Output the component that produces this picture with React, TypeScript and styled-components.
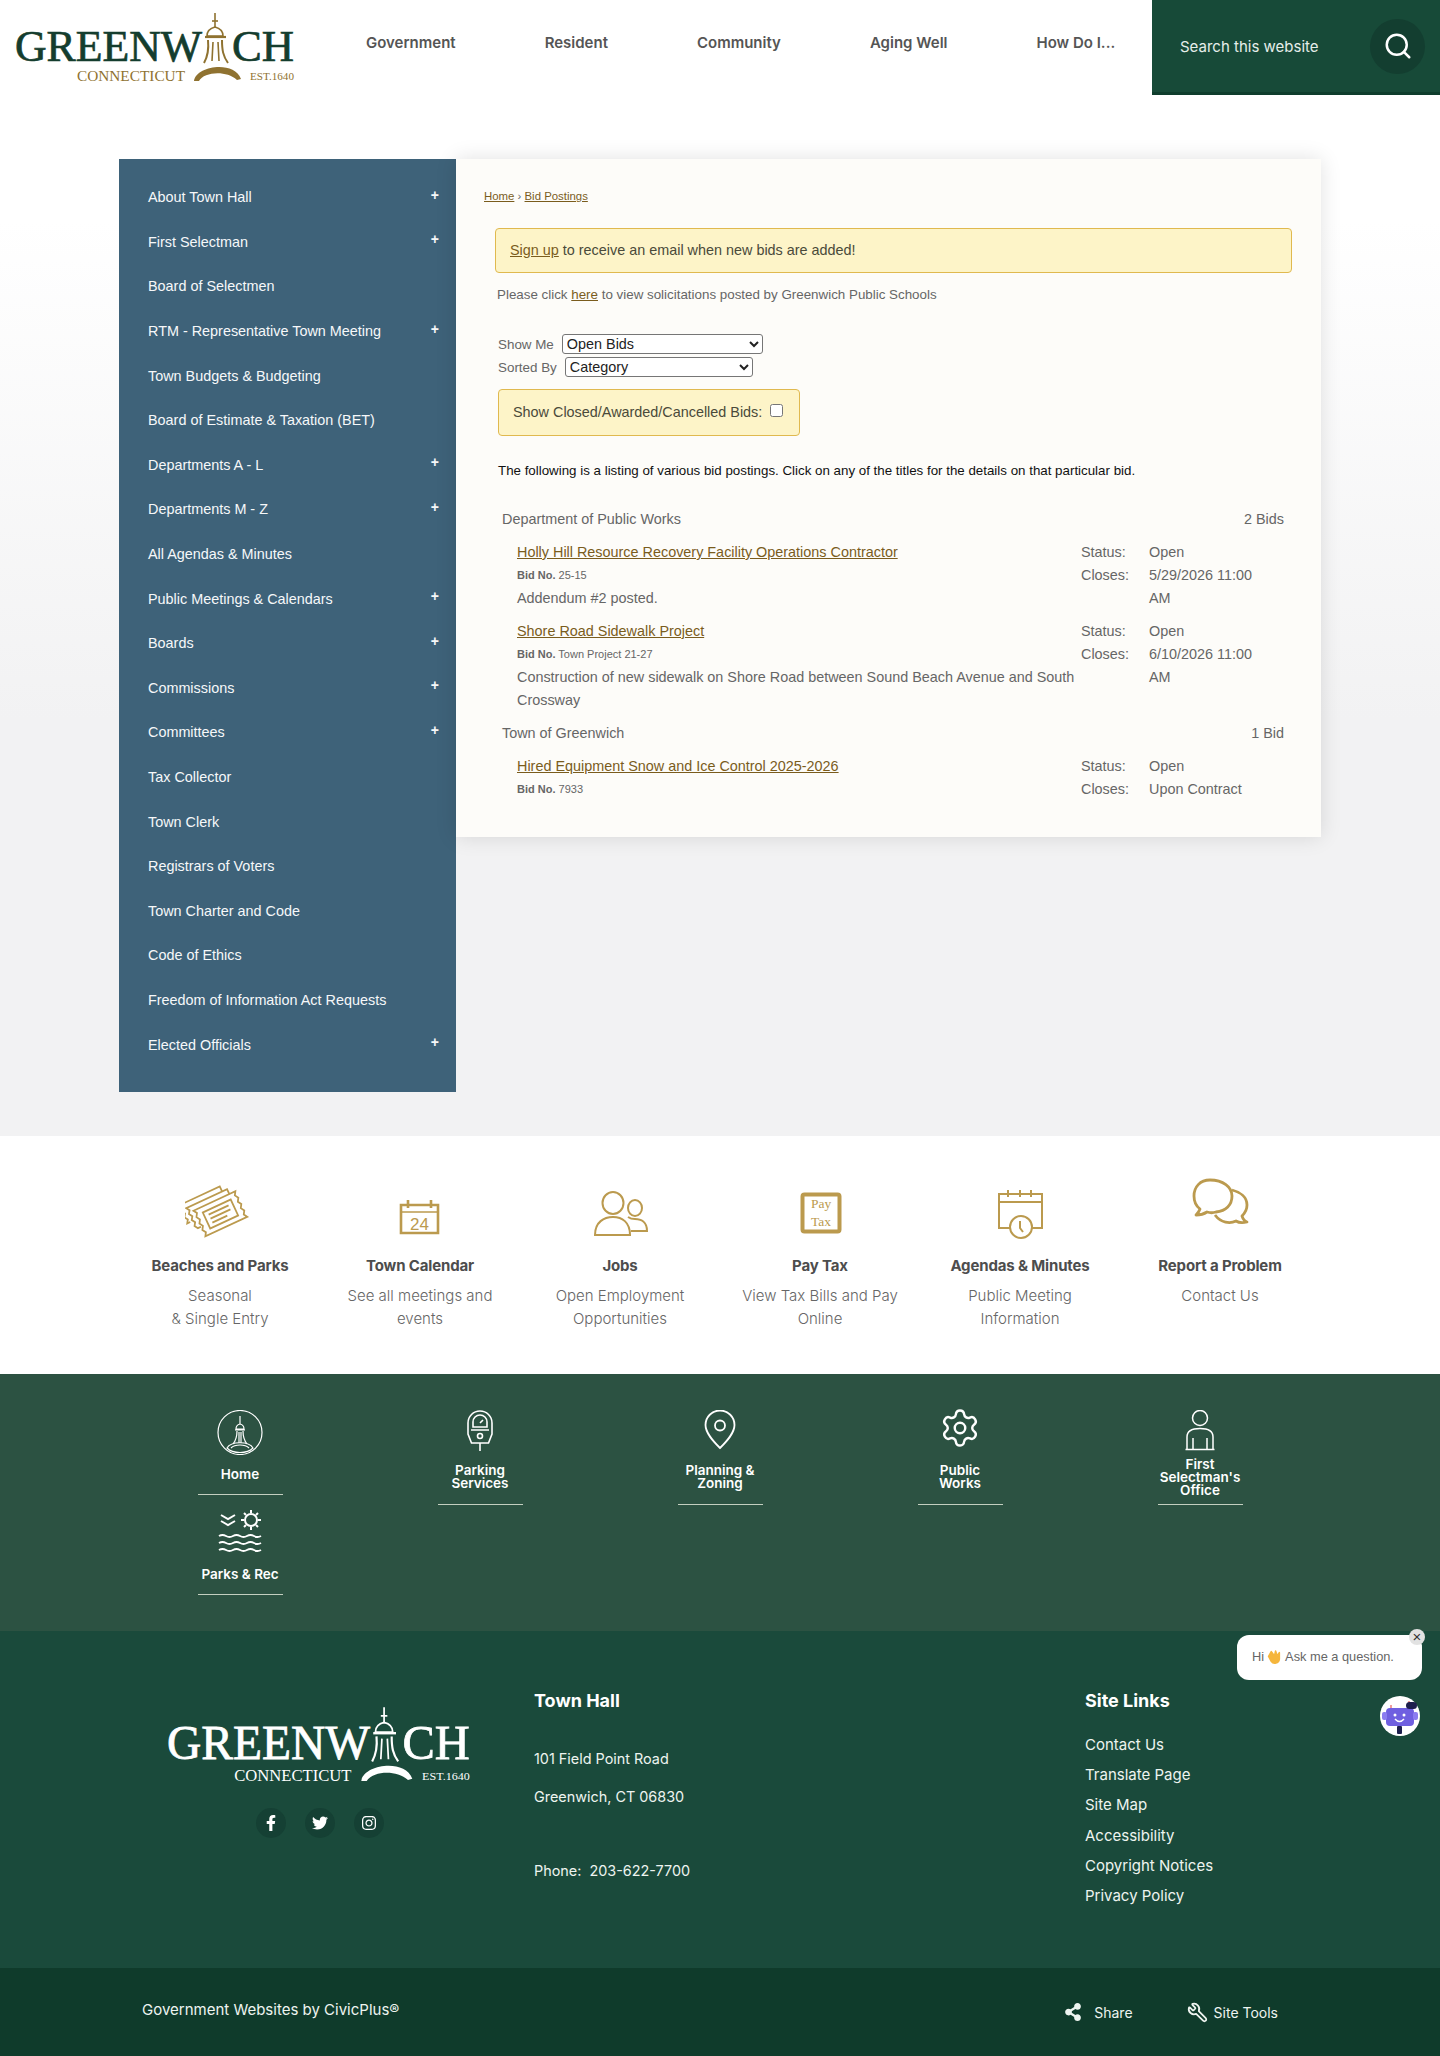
import { ReactNode } from "react";
import styled, { createGlobalStyle } from "styled-components";
import { Search, Settings, Wrench } from "lucide-react";
import { FaFacebookF, FaInstagram, FaShareAlt, FaTwitter } from "react-icons/fa";

const SANS = '"Liberation Sans", Arial, sans-serif';
const DISPLAY = 'Inter, "Noto Sans", sans-serif';
const GOLD = "#bb9a4e";

const sideLinks: [string, boolean][] = [
  ["About Town Hall", true],
  ["First Selectman", true],
  ["Board of Selectmen", false],
  ["RTM - Representative Town Meeting", true],
  ["Town Budgets & Budgeting", false],
  ["Board of Estimate & Taxation (BET)", false],
  ["Departments A - L", true],
  ["Departments M - Z", true],
  ["All Agendas & Minutes", false],
  ["Public Meetings & Calendars", true],
  ["Boards", true],
  ["Commissions", true],
  ["Committees", true],
  ["Tax Collector", false],
  ["Town Clerk", false],
  ["Registrars of Voters", false],
  ["Town Charter and Code", false],
  ["Code of Ethics", false],
  ["Freedom of Information Act Requests", false],
  ["Elected Officials", true],
];

const bidGroups = [
  {
    name: "Department of Public Works",
    count: "2 Bids",
    bids: [
      {
        title: "Holly Hill Resource Recovery Facility Operations Contractor",
        no: "25-15",
        desc: "Addendum #2 posted.",
        closes: "5/29/2026 11:00 AM",
      },
      {
        title: "Shore Road Sidewalk Project",
        no: "Town Project 21-27",
        desc: "Construction of new sidewalk on Shore Road between Sound Beach Avenue and South Crossway",
        closes: "6/10/2026 11:00 AM",
      },
    ],
  },
  {
    name: "Town of Greenwich",
    count: "1 Bid",
    bids: [
      {
        title: "Hired Equipment Snow and Ice Control 2025-2026",
        no: "7933",
        desc: "",
        closes: "Upon Contract",
      },
    ],
  },
];

// Drawn in page pixels of the header logo, the footer one just scales it.
const Logo = ({ main, accent, width }: { main: string; accent: string; width: number }) => (
  <svg width={width} viewBox="15 11 281 73" style={{ display: "block" }}>
    <g fontFamily='"Liberation Serif", serif' fill={main} stroke={main} strokeWidth="0.7">
      <text x="15" y="61" fontSize="44" textLength="187" lengthAdjust="spacingAndGlyphs">
        GREENW
      </text>
      <text x="232" y="61" fontSize="44" textLength="62" lengthAdjust="spacingAndGlyphs">
        CH
      </text>
    </g>
    <g fontFamily='"Liberation Serif", serif' fill={accent}>
      <text x="77" y="81" fontSize="15.5" textLength="108" lengthAdjust="spacingAndGlyphs">
        CONNECTICUT
      </text>
      <text x="250" y="80" fontSize="10.5" textLength="44" lengthAdjust="spacingAndGlyphs">
        EST.1640
      </text>
    </g>
    <g fill="none" stroke={accent} strokeWidth="1.6">
      <path d="M215 13V28" />
      <path d="M212 21h6" />
      <path d="M207 36Q207 29 215 27Q223 29 223 36Z" />
      <path d="M205 37H226" strokeWidth="2.2" />
      <path d="M208 40C209 50 208 56 204 63M222 40C222 50 223 56 228 63" strokeWidth="2" />
      <path d="M213 42L212 61M218 42L219 61" />
    </g>
    <path d="M194 81C196 66 234 60 241 79L237 80C226 70 204 72 199 81Z" fill={accent} />
  </svg>
);

const TicketIcon = () => (
  <svg viewBox="0 0 70 70" fill="none" stroke={GOLD} strokeWidth="1.6">
    <g transform="rotate(-25 35 38) translate(35 38) scale(1.1) translate(-35 -38)">
      <path d="M14 26H56l-2 3.2 2 3.2-2 3.2 2 3.2-2 3.2 2 3.2-2 3.2 2 3.2H14l2-3.2-2-3.2 2-3.2-2-3.2 2-3.2-2-3.2 2-3.2-2-3.2Z" />
      <path d="M21 31H49V47H21Z" />
      <path d="M25 35H45M25 39H45M25 43H40" />
      <path d="M50 26V21H9l2 3-2 3 2 3-2 3 2 3-2 3 2 3h3" />
      <path d="M45 21V16H4l2 3-2 3 2 3-2 3 2 3-2 3h3" />
    </g>
  </svg>
);

const CalendarIcon = () => (
  <svg viewBox="0 0 70 70" fill="none" stroke={GOLD} strokeWidth="2.6">
    <path d="M16 30H53V58H16Z" />
    <path d="M16 37H53" strokeWidth="1.4" />
    <path d="M23 25V33M46 25V33" />
    <text x="34.5" y="55" fontSize="17" textAnchor="middle" fontFamily='"Liberation Sans", sans-serif' fill={GOLD} stroke="none">
      24
    </text>
  </svg>
);

const UsersIcon = () => (
  <svg viewBox="0 0 70 70" fill="none" stroke={GOLD} strokeWidth="2">
    <ellipse cx="28" cy="28" rx="10.5" ry="11" />
    <path d="M10 60C10 47 19 42 28 42C37 42 45 47 45 60Z" />
    <ellipse cx="50" cy="33" rx="7" ry="8" />
    <path d="M43 42C46 44 47 44 50 44C56 44 62 47 62 56H46" />
  </svg>
);

const PayTaxIcon = () => (
  <svg viewBox="0 0 70 70">
    <rect x="17.5" y="19.5" width="37" height="37" rx="2" fill="#fff" stroke={GOLD} strokeWidth="4" />
    <g fontFamily='"Liberation Serif", serif' fontSize="13.5" fill={GOLD} textAnchor="middle">
      <text x="36" y="33">Pay</text>
      <text x="36" y="51">Tax</text>
    </g>
  </svg>
);

const AgendaIcon = () => (
  <svg viewBox="0 0 70 70" fill="none" stroke={GOLD} strokeWidth="2">
    <path d="M26 53H14V19H57V53H47" />
    <path d="M14 27H57" />
    <path d="M23 15V22M35 15V22M46 15V22" />
    <ellipse cx="36" cy="52" rx="11" ry="11" fill="#fff" />
    <path d="M35 46V53L38 57" />
  </svg>
);

const BubblesIcon = () => (
  <svg viewBox="0 0 70 70" fill="none" stroke={GOLD} strokeWidth="2.8" strokeLinejoin="round">
    <path d="M25 5C15 5 9 12 9 21C9 27 11 31 15 34C14 37 13 38 11 40C15 40 19 39 22 37C25 38 28 38 31 37C41 36 47 30 47 21C47 12 38 5 25 5Z" />
    <path d="M47 15C55 17 62 22 62 30C62 35 60 38 57 41C58 44 59 46 62 47C58 48 54 48 51 46C45 49 36 48 30 40" />
  </svg>
);

const HomeIcon = () => (
  <svg viewBox="0 0 50 45" fill="none" stroke="#fff" strokeWidth="1.2">
    <ellipse cx="25" cy="22.5" rx="22" ry="22" />
    <path d="M25 6V14M21 19Q21 15 25 14Q29 15 29 19ZM20 20H30M22 21Q22 29 18 34M28 21Q28 29 32 34M24 22V33M26 22V33" />
    <path d="M12 38C16 31 34 31 38 38C32 44 18 44 12 38Z" />
    <path d="M16 38C20 34 30 34 34 38" />
  </svg>
);

const MeterIcon = () => (
  <svg viewBox="0 0 50 45" fill="none" stroke="#fff" strokeWidth="1.6">
    <path d="M13 13A12 12 0 0 1 37 13V24L33.5 33H16.5L13 24Z" />
    <path d="M18 17V12A7 7 0 0 1 32 12V17ZM16 20H34M25 33V41M25 13L28 10" />
    <circle cx="25" cy="26" r="2.5" />
  </svg>
);

const PinIcon = () => (
  <svg viewBox="0 0 50 45" fill="none" stroke="#fff" strokeWidth="1.8">
    <path d="M25 38C18 31 10.5 23 10.5 15A14.5 14.5 0 0 1 39.5 15C39.5 23 32 31 25 38Z" />
    <circle cx="25" cy="15.5" r="5" />
  </svg>
);

const PersonIcon = () => (
  <svg viewBox="0 0 50 45" fill="none" stroke="#fff" strokeWidth="1.5">
    <circle cx="25" cy="8" r="7.5" />
    <path d="M12 39V27Q12 18.5 25 18.5Q38 18.5 38 27V39M10.5 39.5H39.5M18 28V39M32 28V39" />
  </svg>
);

const ParksIcon = () => (
  <svg viewBox="0 0 50 45" fill="none" stroke="#fff" strokeWidth="2">
    <circle cx="36" cy="10" r="6" />
    <path d="M36 0V3M36 17V20M26 10H29M43 10H46M29 3L31 5M41 15L43 17M43 3L41 5M31 15L29 17" />
    <path d="M6 5L13 9L20 5M6 11L13 15L20 11" />
    <path d="M4 26q3.5-2 7 0t7 0 7 0 7 0 7 0 7 0M4 33q3.5-2 7 0t7 0 7 0 7 0 7 0 7 0M4 40q3.5-2 7 0t7 0 7 0 7 0 7 0 7 0" />
  </svg>
);

const WaveIcon = () => (
  <svg width="15" height="16" viewBox="0 0 14 14">
    <path d="M4 2L7 6L8 1.5L9.5 6L11.5 3L11.5 9C11 13 6 14 4 11L1.5 6.5Z" fill="#f5b63c" stroke="#f5b63c" strokeWidth="1.5" strokeLinejoin="round" />
  </svg>
);

const BotIcon = () => (
  <svg width="40" height="40" viewBox="0 0 40 40">
    <circle cx="20" cy="20" r="20" fill="#fff" />
    <path d="M11 9V13M29 5V13" stroke="#e45b5b" strokeWidth="1.2" />
    <rect x="6" y="12" width="28" height="18" rx="4" fill="#6f5fe0" />
    <rect x="2" y="16" width="5" height="8" rx="2" fill="#8b7cf0" />
    <rect x="33" y="16" width="5" height="8" rx="2" fill="#8b7cf0" />
    <circle cx="15" cy="19" r="1.5" fill="#fff" />
    <circle cx="24" cy="19" r="1.5" fill="#fff" />
    <path d="M15 23Q19.5 28 24 23" stroke="#fff" strokeWidth="1.5" fill="none" />
    <rect x="17" y="30" width="5" height="8" rx="1" fill="#1d1f4d" />
    <rect x="26" y="6" width="11" height="7" rx="3.5" fill="#1d1f4d" />
  </svg>
);

const quickLinks: { icon: ReactNode; title: string; text: string }[] = [
  { icon: <TicketIcon />, title: "Beaches and Parks", text: "Seasonal\n& Single Entry" },
  { icon: <CalendarIcon />, title: "Town Calendar", text: "See all meetings and events" },
  { icon: <UsersIcon />, title: "Jobs", text: "Open Employment Opportunities" },
  { icon: <PayTaxIcon />, title: "Pay Tax", text: "View Tax Bills and Pay Online" },
  { icon: <AgendaIcon />, title: "Agendas & Minutes", text: "Public Meeting Information" },
  { icon: <BubblesIcon />, title: "Report a Problem", text: "Contact Us" },
];

const App = () => (
  <>
    <GlobalStyle />
    <Header>
      <LogoSlot>
        <Logo main="#143d2e" accent="#8f7230" width={281} />
      </LogoSlot>
      <MainNav>
        {["Government", "Resident", "Community", "Aging Well", "How Do I..."].map((item) => (
          <NavItem key={item}>{item}</NavItem>
        ))}
      </MainNav>
      <SearchPanel>
        <SearchInput placeholder="Search this website" />
        <SearchButton aria-label="Search">
          <Search size={30} strokeWidth={2} />
        </SearchButton>
      </SearchPanel>
    </Header>

    <Main>
      <Columns>
        <SideNav>
          {sideLinks.map(([label, expandable]) => (
            <SideItem key={label}>
              {label}
              {expandable && <Plus>+</Plus>}
            </SideItem>
          ))}
        </SideNav>
        <Content>
          <Breadcrumb>
            <a href="#">Home</a> › <a href="#">Bid Postings</a>
          </Breadcrumb>
          <Alert>
            <span>
              <a href="#">Sign up</a> to receive an email when new bids are added!
            </span>
          </Alert>
          <Note>
            Please click <a href="#">here</a> to view solicitations posted by Greenwich Public Schools
          </Note>
          <FilterRow $first>
            <label htmlFor="show">Show Me</label>
            <FilterSelect id="show" $width={201}>
              <option>Open Bids</option>
            </FilterSelect>
          </FilterRow>
          <FilterRow>
            <label htmlFor="sort">Sorted By</label>
            <FilterSelect id="sort" $width={188}>
              <option>Category</option>
            </FilterSelect>
          </FilterRow>
          <ClosedBox>
            Show Closed/Awarded/Cancelled Bids:
            <input type="checkbox" />
          </ClosedBox>
          <Listing>
            The following is a listing of various bid postings. Click on any of the titles for the details on that
            particular bid.
          </Listing>
          <BidList>
            {bidGroups.map((group) => (
              <div key={group.name}>
                <GroupHead>
                  <span>{group.name}</span>
                  <span>{group.count}</span>
                </GroupHead>
                {group.bids.map((bid) => (
                  <BidRow key={bid.title}>
                    <BidMain>
                      <BidTitle href="#">{bid.title}</BidTitle>
                      <BidNo>
                        <b>Bid No.</b> {bid.no}
                      </BidNo>
                      {bid.desc && <div>{bid.desc}</div>}
                    </BidMain>
                    <BidFacts>
                      <span>Status:</span>
                      <span>Open</span>
                      <span>Closes:</span>
                      <span>{bid.closes}</span>
                    </BidFacts>
                  </BidRow>
                ))}
              </div>
            ))}
          </BidList>
        </Content>
      </Columns>
    </Main>

    <QuickLinks>
      {quickLinks.map((link) => (
        <QuickLink key={link.title}>
          <QuickIcon>{link.icon}</QuickIcon>
          <QuickTitle>{link.title}</QuickTitle>
          <QuickText>{link.text}</QuickText>
        </QuickLink>
      ))}
    </QuickLinks>

    <DeptBand>
      <DeptGrid>
        <DeptColumn>
          <DeptTile $short>
            <DeptIcon>
              <HomeIcon />
            </DeptIcon>
            <DeptLabel $short>Home</DeptLabel>
          </DeptTile>
          <DeptTile $short>
            <DeptIcon>
              <ParksIcon />
            </DeptIcon>
            <DeptLabel $short>Parks &amp; Rec</DeptLabel>
          </DeptTile>
        </DeptColumn>
        <DeptTile>
          <DeptIcon>
            <MeterIcon />
          </DeptIcon>
          <DeptLabel>
            Parking
            <br />
            Services
          </DeptLabel>
        </DeptTile>
        <DeptTile>
          <DeptIcon>
            <PinIcon />
          </DeptIcon>
          <DeptLabel>
            Planning &amp;
            <br />
            Zoning
          </DeptLabel>
        </DeptTile>
        <DeptTile>
          <DeptIcon>
            <GearIcon size={42} strokeWidth={1.4} color="#fff" />
          </DeptIcon>
          <DeptLabel>
            Public
            <br />
            Works
          </DeptLabel>
        </DeptTile>
        <DeptTile>
          <DeptIcon>
            <PersonIcon />
          </DeptIcon>
          <DeptLabel>
            First
            <br />
            Selectman's
            <br />
            Office
          </DeptLabel>
        </DeptTile>
      </DeptGrid>
    </DeptBand>

    <Footer>
      <FooterGrid>
        <FooterBrand>
          <Logo main="#fff" accent="#fff" width={305} />
          <Socials>
            <Social>
              <FaFacebookF size={16} />
            </Social>
            <Social>
              <FaTwitter size={16} />
            </Social>
            <Social>
              <FaInstagram size={16} />
            </Social>
          </Socials>
        </FooterBrand>
        <div>
          <FooterHead>Town Hall</FooterHead>
          <Address>
            101 Field Point Road
            <br />
            Greenwich, CT 06830
          </Address>
          <Address $gap>Phone:&nbsp; 203-622-7700</Address>
        </div>
        <div>
          <FooterHead>Site Links</FooterHead>
          <SiteLinks>
            {["Contact Us", "Translate Page", "Site Map", "Accessibility", "Copyright Notices", "Privacy Policy"].map(
              (item) => (
                <li key={item}>{item}</li>
              ),
            )}
          </SiteLinks>
        </div>
      </FooterGrid>
      <ChatBubble>
        Hi <WaveIcon /> Ask me a question.
        <ChatClose>×</ChatClose>
      </ChatBubble>
      <ChatAvatar>
        <BotIcon />
      </ChatAvatar>
    </Footer>

    <BottomBar>
      <span>Government Websites by CivicPlus®</span>
      <BottomTools>
        <BottomTool $gap={12}>
          <FaShareAlt size={18} />
          Share
        </BottomTool>
        <BottomTool $gap={6}>
          <FlippedWrench size={21} strokeWidth={2} />
          Site Tools
        </BottomTool>
      </BottomTools>
    </BottomBar>
  </>
);
export default App;

const GlobalStyle = createGlobalStyle`
  * {
    box-sizing: border-box;
  }
  body {
    margin: 0;
    background: #fff;
    font-family: ${SANS};
  }
`;

const Header = styled.header`
  display: flex;
  height: 95px;
  background: #fff;
`;

const LogoSlot = styled.div`
  width: 366px;
  padding: 11px 0 0 15px;
`;

const MainNav = styled.nav`
  display: flex;
  flex: 1;
  gap: 89px;
  align-items: center;
  padding-bottom: 11px;
`;

const NavItem = styled.a`
  color: #555;
  font-family: ${DISPLAY};
  font-size: 15px;
  font-weight: 600;
  white-space: nowrap;
`;

const SearchPanel = styled.div`
  display: flex;
  align-items: center;
  width: 288px;
  padding: 0 15px 0 26px;
  background: #174a38;
  border-bottom: 3px solid #0f3d2d;
`;

const SearchInput = styled.input`
  flex: 1;
  min-width: 0;
  border: 0;
  background: transparent;
  color: #fff;
  font-family: ${DISPLAY};
  font-size: 15px;

  &::placeholder {
    color: #e6eeea;
    opacity: 1;
  }
`;

const SearchButton = styled.button`
  display: flex;
  align-items: center;
  justify-content: center;
  width: 55px;
  height: 55px;
  border: 0;
  border-radius: 50%;
  background: #133e30;
  color: #fff;
`;

const Main = styled.main`
  height: 1041px;
  padding-top: 64px;
  background: linear-gradient(#fff 12%, #f2f2f3 60%);
`;

const Columns = styled.div`
  display: flex;
  align-items: flex-start;
  width: 1202px;
  margin: 0 auto;
`;

const SideNav = styled.nav`
  width: 337px;
  padding: 16px 17px 25px 29px;
  background: #3e6279;
`;

const SideItem = styled.a`
  display: flex;
  align-items: center;
  justify-content: space-between;
  height: 44.6px;
  color: #f6f8f9;
  font-size: 14.4px;
`;

const Plus = styled.span`
  margin-bottom: 5px;
  font-size: 14px;
  font-weight: 700;
`;

const Content = styled.section`
  width: 865px;
  padding: 30px 29px 36px 28px;
  background: #fdfcf9;
  box-shadow: 0 0 20px rgba(0, 0, 0, 0.12);
  color: #666;

  a {
    color: #7a5c1d;
  }
`;

const Breadcrumb = styled.div`
  font-size: 11.4px;
  line-height: 15px;
`;

const Alert = styled.div`
  display: flex;
  align-items: center;
  height: 45px;
  margin: 24px 0 0 11px;
  padding: 0 14px 2px;
  background: #fdf4c8;
  border: 1px solid #e0b94f;
  border-radius: 4px;
  color: #4a4a3a;
  font-size: 14.4px;
`;

const Note = styled.p`
  margin: 13px 0 0 13px;
  font-size: 13.36px;
  line-height: 18px;
`;

const FilterRow = styled.div<{ $first?: boolean }>`
  display: flex;
  align-items: center;
  gap: 8px;
  height: 20px;
  margin: ${(p) => (p.$first ? "30px" : "3px")} 0 0 14px;
  font-size: 13.4px;
`;

const FilterSelect = styled.select<{ $width: number }>`
  width: ${(p) => p.$width}px;
  height: 20px;
  background: #fff;
  border: 1px solid #767676;
  border-radius: 3px;
  color: #222;
  font-family: ${SANS};
  font-size: 14.4px;
`;

const ClosedBox = styled.div`
  display: flex;
  align-items: center;
  gap: 8px;
  width: 302px;
  height: 47px;
  margin: 12px 0 0 14px;
  padding: 0 0 2px 14px;
  background: #fdf4c8;
  border: 1px solid #e0b94f;
  border-radius: 4px;
  color: #4a4a3a;
  font-size: 14.4px;

  input {
    width: 13px;
    height: 13px;
    margin: 0 0 3px;
  }
`;

const Listing = styled.p`
  margin: 26px 0 0 14px;
  color: #111;
  font-size: 13.33px;
  line-height: 18px;
`;

const BidList = styled.div`
  display: flex;
  flex-direction: column;
  gap: 10px;
  margin: 28px 8px 0 18px;
  font-size: 14.4px;
  line-height: 23px;
`;

const GroupHead = styled.div`
  display: flex;
  justify-content: space-between;
  margin-bottom: 10px;
`;

const BidRow = styled.div`
  display: flex;
  padding-left: 15px;
  margin-bottom: 10px;

  &:last-child {
    margin-bottom: 0;
  }
`;

const BidMain = styled.div`
  flex-shrink: 0;
  width: 564px;
`;

const BidTitle = styled.a`
  display: block;
`;

const BidNo = styled.div`
  font-size: 11px;
  line-height: 23px;
`;

const BidFacts = styled.div`
  display: grid;
  grid-template-columns: 68px 120px;
  align-self: start;
`;

const QuickLinks = styled.section`
  display: grid;
  grid-template-columns: repeat(6, 200px);
  justify-content: center;
  height: 238px;
  padding-top: 39px;
  background: #fff;
`;

const QuickLink = styled.a`
  display: flex;
  flex-direction: column;
  align-items: center;
  font-family: ${DISPLAY};
  text-align: center;
`;

const QuickIcon = styled.div`
  width: 70px;
  height: 70px;

  svg {
    display: block;
    width: 100%;
    height: 100%;
  }
`;

const QuickTitle = styled.div`
  margin-top: 10px;
  color: #4d4d4d;
  font-size: 15px;
  font-weight: 700;
  letter-spacing: -0.15px;
  line-height: 22px;
`;

const QuickText = styled.div`
  width: 170px;
  margin-top: 7px;
  color: #666;
  font-size: 15px;
  font-weight: 300;
  line-height: 23px;
  white-space: pre-line;
`;

const DeptBand = styled.section`
  height: 257px;
  padding-top: 26px;
  background: #2c5242;
`;

const DeptGrid = styled.div`
  display: grid;
  grid-template-columns: repeat(5, 240px);
  justify-content: center;
  align-items: start;
`;

const DeptColumn = styled.div`
  display: flex;
  flex-direction: column;
  gap: 5px;
`;

const DeptTile = styled.a<{ $short?: boolean }>`
  display: flex;
  flex-direction: column;
  align-items: center;
  width: 85px;
  height: ${(p) => (p.$short ? "95px" : "105px")};
  margin: 0 auto;
  padding-top: 10px;
  border-bottom: 1px solid #c4cfc0;
  color: #fff;
  font-family: ${DISPLAY};
`;

const DeptIcon = styled.div`
  display: flex;
  align-items: flex-start;
  justify-content: center;
  width: 50px;
  height: 45px;
  flex-shrink: 0;

  svg {
    display: block;
  }
`;

const GearIcon = styled(Settings)`
  margin-top: -3px;
`;

const DeptLabel = styled.div<{ $short?: boolean }>`
  display: flex;
  align-items: center;
  height: ${(p) => (p.$short ? "39px" : "44px")};
  color: #fff;
  font-size: 13.5px;
  font-weight: 600;
  line-height: 13px;
  text-align: center;
`;

const Footer = styled.footer`
  position: relative;
  height: 337px;
  background: #1a4a3b;
`;

const FooterGrid = styled.div`
  display: grid;
  grid-template-columns: 415px 551px 1fr;
  width: 1202px;
  margin: 0 auto;
  padding-top: 58px;
  color: #eef4f0;
  font-family: ${DISPLAY};
  font-size: 15px;
`;

const FooterBrand = styled.div`
  width: 305px;
  margin: 16px 0 0 48px;
`;

const Socials = styled.div`
  display: flex;
  justify-content: center;
  gap: 19px;
  margin-top: 24px;
`;

const Social = styled.a`
  display: flex;
  align-items: center;
  justify-content: center;
  width: 30px;
  height: 30px;
  border-radius: 50%;
  background: #154034;
  color: #fff;
`;

const FooterHead = styled.h3`
  margin: 0;
  color: #fff;
  font-size: 18px;
  font-weight: 700;
  line-height: 24px;
`;

const Address = styled.p<{ $gap?: boolean }>`
  margin: ${(p) => (p.$gap ? "36px" : "27px")} 0 0;
  font-size: 14.4px;
  line-height: 38px;
`;

const SiteLinks = styled.ul`
  margin: 17px 0 0;
  padding: 0;
  list-style: none;

  li {
    height: 30.2px;
    line-height: 30px;
  }
`;

const ChatBubble = styled.div`
  position: absolute;
  top: 4px;
  right: 18px;
  display: flex;
  align-items: center;
  gap: 3px;
  width: 185px;
  height: 45px;
  padding: 0 0 2px 15px;
  background: #fff;
  border-radius: 12px;
  color: #666;
  font-family: ${SANS};
  font-size: 12.8px;
`;

const ChatClose = styled.span`
  position: absolute;
  top: -6px;
  right: -3px;
  width: 16px;
  height: 16px;
  background: #e2e2e2;
  border-radius: 50%;
  color: #333;
  font-size: 15px;
  line-height: 15px;
  text-align: center;
`;

const ChatAvatar = styled.div`
  position: absolute;
  top: 65px;
  right: 20px;
  width: 40px;
  height: 40px;
`;

const BottomBar = styled.div`
  display: flex;
  align-items: center;
  height: 88px;
  padding: 0 162px 0 142px;
  background: #0f3b2b;
  color: #eef4f0;
  font-family: ${DISPLAY};
  font-size: 15px;

  > span {
    margin-bottom: 6px;
  }
`;

const BottomTools = styled.div`
  display: flex;
  gap: 54px;
  margin-left: auto;
  font-size: 14px;
`;

const BottomTool = styled.a<{ $gap: number }>`
  display: flex;
  align-items: center;
  gap: ${(p) => p.$gap}px;
`;

const FlippedWrench = styled(Wrench)`
  transform: scaleX(-1);
`;
